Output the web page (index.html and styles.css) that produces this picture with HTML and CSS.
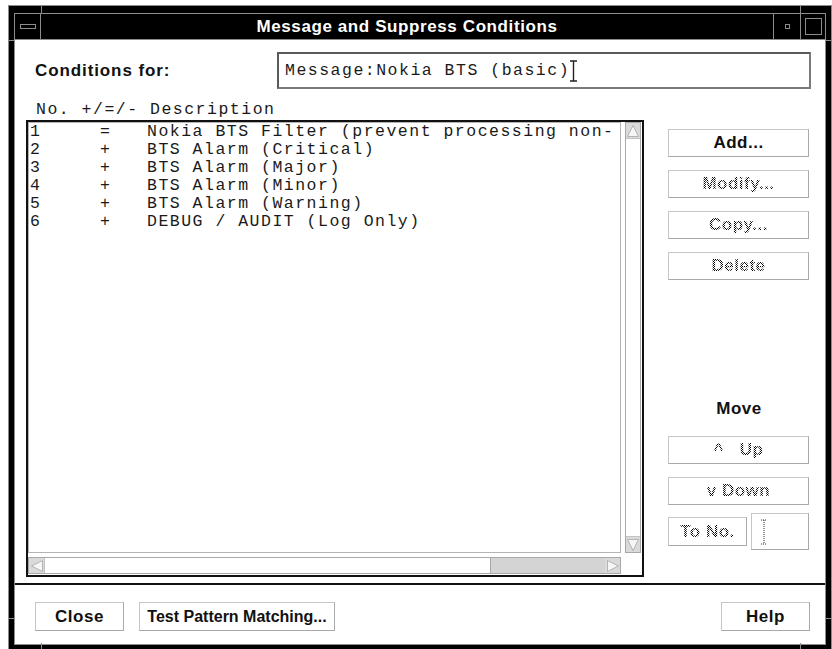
FILE: index.html
```html
<!DOCTYPE html>
<html lang="en">
<head>
<meta charset="utf-8">
<title>Message and Suppress Conditions</title>
<link rel="stylesheet" href="styles.css">
</head>
<body>
<div class="window">
  <!-- resize-handle notches on the window frame -->
  <span class="notch notch-v notch-top-l"></span>
  <span class="notch notch-v notch-top-r"></span>
  <span class="notch notch-v notch-bot-l"></span>
  <span class="notch notch-v notch-bot-r"></span>
  <span class="notch notch-h notch-left-t"></span>
  <span class="notch notch-h notch-left-b"></span>
  <span class="notch notch-h notch-right-t"></span>
  <span class="notch notch-h notch-right-b"></span>

  <div class="inner">
    <div class="titlebar">
      <div class="tb-btn tb-menu"><span class="menu-glyph"></span></div>
      <div class="tb-title">Message and Suppress Conditions</div>
      <div class="tb-btn tb-min"><span class="min-glyph"></span></div>
      <div class="tb-btn tb-max"><span class="max-glyph"></span></div>
    </div>

    <div class="content">
      <div class="cond-row">
        <div class="cond-label">Conditions for:</div>
        <div class="field">
          <span class="mono">Message:Nokia BTS (basic)</span>
          <svg class="ibeam" width="8" height="22" viewBox="0 0 8 22">
            <path d="M0 1h7M3.5 1v20M0 21h7" stroke="#222" stroke-width="1.4" fill="none"/>
          </svg>
        </div>
      </div>

      <div class="work">
        <div class="list-col">
          <div class="list-head mono">No. +/=/- Description</div>
          <div class="listbox">
            <div class="listview mono">
              <div class="row"><span>1</span><span>=</span><span>Nokia BTS Filter (prevent processing non-</span></div>
              <div class="row"><span>2</span><span>+</span><span>BTS Alarm (Critical)</span></div>
              <div class="row"><span>3</span><span>+</span><span>BTS Alarm (Major)</span></div>
              <div class="row"><span>4</span><span>+</span><span>BTS Alarm (Minor)</span></div>
              <div class="row"><span>5</span><span>+</span><span>BTS Alarm (Warning)</span></div>
              <div class="row"><span>6</span><span>+</span><span>DEBUG / AUDIT (Log Only)</span></div>
            </div>
            <div class="vscroll">
              <div class="arrow">
                <svg width="14" height="14" viewBox="0 0 14 14"><polygon points="7,1.5 12.5,12.5 1.5,12.5" fill="#f6f6f6" stroke="#b4b4b4"/></svg>
              </div>
              <div class="vthumb"></div>
              <div class="arrow">
                <svg width="14" height="14" viewBox="0 0 14 14"><polygon points="1.5,1.5 12.5,1.5 7,12.5" fill="#f6f6f6" stroke="#b4b4b4"/></svg>
              </div>
            </div>
            <div class="hscroll">
              <div class="arrow">
                <svg width="14" height="14" viewBox="0 0 14 14"><polygon points="1.5,7 12.5,1.5 12.5,12.5" fill="#f6f6f6" stroke="#b4b4b4"/></svg>
              </div>
              <div class="hthumb"></div>
              <div class="htrough"></div>
              <div class="arrow">
                <svg width="14" height="14" viewBox="0 0 14 14"><polygon points="1.5,1.5 12.5,7 1.5,12.5" fill="#f6f6f6" stroke="#b4b4b4"/></svg>
              </div>
            </div>
            <div class="corner"></div>
          </div>
        </div>

        <div class="side">
          <button class="btn side-btn">Add...</button>
          <button class="btn side-btn"><span class="stipple">Modify...</span></button>
          <button class="btn side-btn"><span class="stipple">Copy...</span></button>
          <button class="btn side-btn"><span class="stipple">Delete</span></button>

          <div class="move">
            <div class="move-label">Move</div>
            <button class="btn side-btn"><span class="stipple">^&nbsp;&nbsp;&nbsp;Up</span></button>
            <button class="btn side-btn"><span class="stipple">v Down</span></button>
            <div class="tono">
              <button class="btn tono-btn"><span class="stipple">To No.</span></button>
              <div class="tono-field">
                <svg width="7" height="26" viewBox="0 0 7 26">
                  <path d="M0 1h6M3 1v24M0 25h6" stroke="#333" stroke-width="1" stroke-dasharray="1 1" fill="none"/>
                </svg>
              </div>
            </div>
          </div>
        </div>
      </div>

      <div class="separator"></div>

      <div class="footer">
        <button class="btn foot-btn close-btn">Close</button>
        <button class="btn foot-btn test-btn">Test Pattern Matching...</button>
        <button class="btn foot-btn help-btn">Help</button>
      </div>
    </div>
  </div>
</div>
</body>
</html>
```
FILE: styles.css
```css
html, body {
  margin: 0;
  padding: 0;
  background: #fff;
  overflow: hidden;
  height: 649px;
}

/* ---------- window frame ---------- */
.window {
  position: relative;
  margin: 5px 0 0 8px;
  width: 824px;
  box-sizing: border-box;
  border: 1px solid #8c8c8c;
  background: #000;
  padding: 7px 5px 5px 5px;
  font-family: "Liberation Sans", Arial, sans-serif;
}

.inner {
  border: 1px solid #8c8c8c;
}

.notch {
  position: absolute;
  background: #8c8c8c;
}
.notch-v { width: 1px; height: 7px; }
.notch-h { height: 1px; width: 6px; }
.notch-top-l { top: 0; left: 32px; }
.notch-top-r { top: 0; left: 791px; }
.notch-bot-l { bottom: 0; left: 32px; }
.notch-bot-r { bottom: 0; left: 791px; }
.notch-left-t { left: 0; top: 34px; }
.notch-left-b { left: 0; top: 612px; }
.notch-right-t { right: 0; top: 34px; }
.notch-right-b { right: 0; top: 612px; }

/* ---------- title bar ---------- */
.titlebar {
  display: flex;
  height: 25px;
  border-bottom: 1px solid #8c8c8c;
  background: #000;
}

.tb-btn {
  display: flex;
  align-items: center;
  justify-content: center;
  box-sizing: border-box;
}
.tb-menu {
  width: 26px;
  border-right: 1px solid #8c8c8c;
}
.menu-glyph {
  width: 14px;
  height: 3px;
  border: 1px solid #8c8c8c;
}
.tb-title {
  flex: 1;
  color: #fff;
  font-weight: bold;
  font-size: 17px;
  letter-spacing: 0.6px;
  text-align: center;
  line-height: 25px;
}
.tb-min {
  width: 28px;
  border-left: 1px solid #8c8c8c;
  border-right: 1px solid #8c8c8c;
}
.min-glyph {
  width: 3px;
  height: 3px;
  border: 1px solid #8c8c8c;
}
.tb-max {
  width: 24px;
}
.max-glyph {
  width: 15px;
  height: 15px;
  border: 1px solid #8c8c8c;
}

/* ---------- dialog body ---------- */
.content {
  height: 604px;
  background: #fff;
  display: flex;
  flex-direction: column;
  color: #111;
}

.mono {
  font-family: "Liberation Mono", "Courier New", monospace;
  font-size: 16.5px;
  letter-spacing: 1.5px;
  color: #1a1a1a;
}

.cond-row {
  display: flex;
  align-items: center;
  padding: 12px 14px 0 20px;
}
.cond-label {
  width: 242px;
  font-weight: bold;
  font-size: 17px;
  letter-spacing: 0.9px;
}
.field {
  flex: 1;
  height: 37px;
  box-sizing: border-box;
  border: 2px solid #5a5a5a;
  border-right-color: #7a7a7a;
  border-bottom-color: #7a7a7a;
  display: flex;
  align-items: center;
  padding-left: 6px;
}
.ibeam {
  margin-left: 0;
  margin-top: 1px;
}

.work {
  display: flex;
  padding: 12px 15px 0 11px;
}
.list-col {
  width: 618px;
}
.list-head {
  height: 18px;
  line-height: 18px;
  padding-left: 10px;
  margin-bottom: 1px;
}

.listbox {
  height: 457px;
  box-sizing: border-box;
  border: 2px solid #111;
  display: grid;
  grid-template-columns: 1fr 16px;
  grid-template-rows: 1fr 17px;
  column-gap: 4px;
  row-gap: 4px;
  padding: 0 1px 1px 0;
}
.listview {
  border: 1px solid #b4b4b4;
  padding: 0 0 0 1px;
  overflow: hidden;
  white-space: nowrap;
}
.row {
  display: grid;
  grid-template-columns: 70px 47px 1fr;
  height: 18px;
  line-height: 18px;
}

.vscroll {
  border: 1px solid #a8a8a8;
  display: flex;
  flex-direction: column;
  background: #fff;
}
.vscroll .arrow {
  height: 15px;
  background: #dadada;
  display: flex;
  align-items: center;
  justify-content: center;
}
.vthumb {
  flex: 1;
  border-top: 1px solid #c4c4c4;
  border-bottom: 1px solid #c4c4c4;
}

.hscroll {
  border: 1px solid #a8a8a8;
  display: flex;
  background: #fff;
}
.hscroll .arrow {
  width: 15px;
  background: #dadada;
  display: flex;
  align-items: center;
  justify-content: center;
}
.hthumb {
  width: 445px;
  border-left: 1px solid #c4c4c4;
  border-right: 1px solid #a8a8a8;
}
.htrough {
  flex: 1;
  background: #d4d4d4;
}

/* ---------- buttons ---------- */
.btn {
  display: block;
  box-sizing: border-box;
  margin: 0;
  padding: 0;
  background: #fff;
  border: 1px solid #c6c6c6;
  border-right-color: #a9a9a9;
  border-bottom-color: #a9a9a9;
  font-family: "Liberation Sans", Arial, sans-serif;
  font-weight: bold;
  font-size: 17px;
  letter-spacing: 0.5px;
  color: #111;
  white-space: nowrap;
}

.stipple {
  color: transparent;
  background-image: repeating-conic-gradient(#000 0 25%, transparent 0 50%);
  background-size: 2px 2px;
  -webkit-background-clip: text;
  background-clip: text;
}

.side {
  margin-left: 24px;
  flex: 1;
  display: flex;
  flex-direction: column;
  padding: 28px 0 27px 0;
}
.side-btn {
  width: 141px;
  height: 28px;
  margin-bottom: 13px;
}
.move {
  margin-top: auto;
  display: flex;
  flex-direction: column;
}
.move-label {
  height: 20px;
  line-height: 20px;
  text-align: center;
  font-weight: bold;
  font-size: 17px;
  letter-spacing: 0.5px;
  margin-bottom: 17px;
}
.move .side-btn:last-of-type {
  margin-bottom: 8px;
}
.tono {
  display: flex;
  align-items: center;
  height: 37px;
}
.tono-btn {
  width: 79px;
  height: 29px;
}
.tono-field {
  margin-left: 4px;
  width: 58px;
  height: 37px;
  box-sizing: border-box;
  border: 1px solid #c6c6c6;
  border-right-color: #a9a9a9;
  border-bottom-color: #a9a9a9;
  display: flex;
  align-items: center;
  padding-left: 9px;
}

/* ---------- footer ---------- */
.separator {
  margin-top: 6px;
  height: 2px;
  background: #111;
}
.footer {
  display: flex;
  padding: 17px 15px 0 20px;
  gap: 15px;
}
.foot-btn {
  height: 29px;
}
.close-btn { width: 89px; }
.test-btn {
  width: 196px;
  font-size: 16px;
  letter-spacing: 0;
}
.help-btn { width: 89px; margin-left: auto; }
```
